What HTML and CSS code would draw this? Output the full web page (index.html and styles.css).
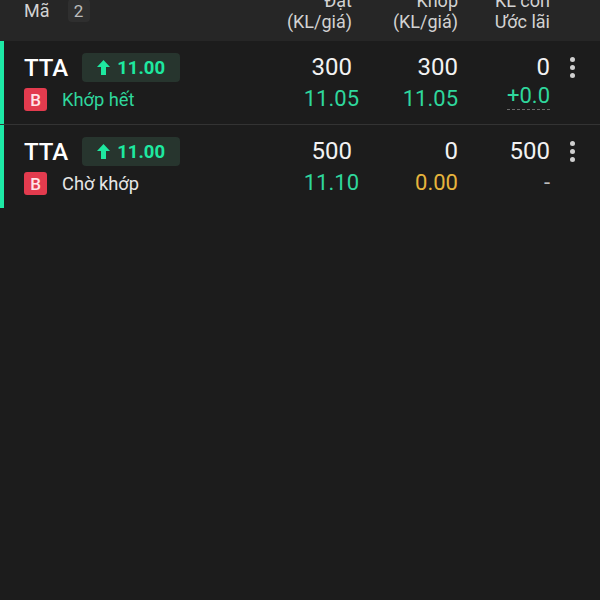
FILE: index.html
```html
<!DOCTYPE html>
<html lang="vi">
<head>
  <meta charset="UTF-8" />
  <title>Sổ lệnh</title>
  <link rel="stylesheet" href="styles.css">
</head>
<body>
  <div class="bang">
    <!-- TIÊU ĐỀ -->
    <div class="tieu-de hang-luoi">
      <div class="tieu-de-ma">
        <span>Mã</span>
        <span class="so-luong">2</span>
      </div>
      <div class="cot-tieu-de">
        <span>Đặt</span>
        <span>(KL/giá)</span>
      </div>
      <div class="cot-tieu-de">
        <span>Khớp</span>
        <span>(KL/giá)</span>
      </div>
      <div class="cot-tieu-de">
        <span>KL còn</span>
        <span>Ước lãi</span>
      </div>
      <div></div>
    </div>

    <!-- DANH SÁCH LỆNH -->
    <div class="lenh hang-luoi">
      <div class="o-ma">
        <div class="dong-tren">
          <span class="ma-ck">TTA</span>
          <span class="gia-tham-chieu">
            <svg width="13" height="15" viewBox="0 0 13 15"><path d="M6.5 0 L13 7 H9 V15 H4 V7 H0 Z" fill="#1ee8a0"/></svg>
            11.00
          </span>
        </div>
        <div class="dong-duoi">
          <span class="loai-lenh">B</span>
          <span class="trang-thai xanh">Khớp hết</span>
        </div>
      </div>
      <div class="o-so">
        <span class="so-lon">300</span>
        <span class="so-nho xanh lech">11.05</span>
      </div>
      <div class="o-so">
        <span class="so-lon">300</span>
        <span class="so-nho xanh">11.05</span>
      </div>
      <div class="o-so">
        <span class="so-lon">0</span>
        <span class="so-nho xanh gach-duoi">+0.0</span>
      </div>
      <div class="o-menu"><span class="ba-cham"><i></i><i></i><i></i></span></div>
    </div>

    <div class="lenh hang-luoi">
      <div class="o-ma">
        <div class="dong-tren">
          <span class="ma-ck">TTA</span>
          <span class="gia-tham-chieu">
            <svg width="13" height="15" viewBox="0 0 13 15"><path d="M6.5 0 L13 7 H9 V15 H4 V7 H0 Z" fill="#1ee8a0"/></svg>
            11.00
          </span>
        </div>
        <div class="dong-duoi">
          <span class="loai-lenh">B</span>
          <span class="trang-thai">Chờ khớp</span>
        </div>
      </div>
      <div class="o-so">
        <span class="so-lon">500</span>
        <span class="so-nho xanh lech">11.10</span>
      </div>
      <div class="o-so">
        <span class="so-lon">0</span>
        <span class="so-nho vang">0.00</span>
      </div>
      <div class="o-so">
        <span class="so-lon">500</span>
        <span class="so-nho xam">-</span>
      </div>
      <div class="o-menu"><span class="ba-cham"><i></i><i></i><i></i></span></div>
    </div>
  </div>
</body>
</html>
```

FILE: styles.css
```css
* {
  margin: 0;
  padding: 0;
  box-sizing: border-box;
}

body {
  background-color: #1c1c1c;
  color: #ffffff;
  font-family: Roboto, "Noto Sans", Arial, sans-serif;
  height: 600px;
  overflow: hidden;
}

.hang-luoi {
  display: grid;
  grid-template-columns: 1fr 90px 106px 92px 44px;
  padding-left: 24px;
  padding-right: 6px;
}

/* Tiêu đề (phần trên bị cắt khỏi màn hình) */
.tieu-de {
  background-color: #262626;
  height: 53px;
  margin-top: -12px;
  align-items: end;
  padding-bottom: 9px;
  color: #d2d2d2;
  font-size: 18px;
}

.tieu-de-ma {
  display: flex;
  align-items: center;
  gap: 18px;
  height: 23px;
  margin-bottom: 10px;
}

.so-luong {
  background-color: #2f2f2f;
  color: #bdbdbd;
  border-radius: 4px;
  width: 22px;
  height: 23px;
  display: flex;
  align-items: center;
  justify-content: center;
  font-size: 17px;
}

.cot-tieu-de {
  display: flex;
  flex-direction: column;
  align-items: flex-end;
  line-height: 21px;
}

/* Từng lệnh */
.lenh {
  position: relative;
  padding-top: 11px;
  padding-bottom: 8px;
  border-bottom: 1px solid #333333;
}

.lenh:last-child {
  border-bottom: none;
}

.lenh::before {
  content: "";
  position: absolute;
  left: 0;
  top: 0;
  bottom: 0;
  width: 4px;
  background-color: #1de9a6;
}

.o-ma {
  display: flex;
  flex-direction: column;
}

.dong-tren {
  height: 31px;
  display: flex;
  align-items: center;
  gap: 14px;
}

.ma-ck {
  font-size: 24px;
  font-weight: 500;
}

.gia-tham-chieu {
  display: flex;
  align-items: center;
  gap: 7px;
  height: 29px;
  width: 98px;
  padding-left: 15px;
  background-color: #27352e;
  border-radius: 4px;
  color: #1ee8a0;
  font-size: 18.5px;
  font-weight: 700;
}

.dong-duoi {
  height: 33px;
  display: flex;
  align-items: center;
  gap: 15px;
}

.loai-lenh {
  width: 23px;
  height: 23px;
  border-radius: 3px;
  background-color: #e33b4e;
  color: #ffe4e8;
  font-size: 17px;
  font-weight: 500;
  display: flex;
  align-items: center;
  justify-content: center;
}

.trang-thai {
  font-size: 18.3px;
  color: #e6e6e6;
}

.o-so {
  display: flex;
  flex-direction: column;
  align-items: flex-end;
}

.so-lon {
  font-size: 24px;
  line-height: 31px;
  color: #f2f2f2;
}

.so-nho {
  font-size: 22px;
  line-height: 31px;
}

.lech {
  margin-right: -7px;
}

.xanh { color: #2fd79c; }
.vang { color: #e6b43c; }
.xam { color: #bdbdbd; }

.gach-duoi {
  line-height: 26px;
  border-bottom: 1px dashed #6b6b6b;
}

.o-menu {
  display: flex;
  justify-content: center;
}

.ba-cham {
  height: 31px;
  display: flex;
  flex-direction: column;
  justify-content: center;
  gap: 3px;
}

.ba-cham i {
  width: 5px;
  height: 5px;
  border-radius: 50%;
  background-color: #cfcfcf;
}
```
